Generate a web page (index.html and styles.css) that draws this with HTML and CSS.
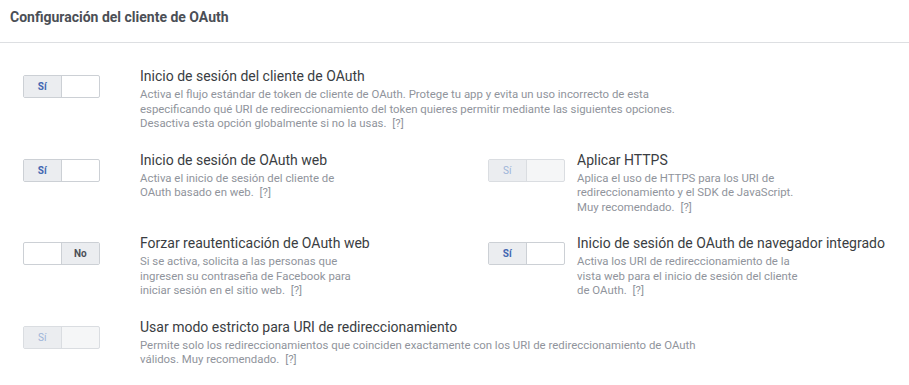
FILE: index.html
```html
<!DOCTYPE html>
<html lang="es">
<head>
    <meta charset="UTF-8">
    <title>Configuración del cliente de OAuth</title>
    <link rel="stylesheet" href="styles.css">
</head>
<body>
    <div class="panel-header">Configuración del cliente de OAuth</div>

    <div class="settings">
        <!-- fila completa -->
        <div class="setting wide">
            <div class="toggle-cell">
                <div class="toggle on"><span class="opt">Sí</span><span class="opt"></span></div>
            </div>
            <div class="info">
                <div class="title">Inicio de sesión del cliente de OAuth</div>
                <div class="desc">Activa el flujo estándar de token de cliente de OAuth. Protege tu app y evita un uso incorrecto de esta especificando qué URI de redireccionamiento del token quieres permitir mediante las siguientes opciones. Desactiva esta opción globalmente si no la usas. <span class="help">[?]</span></div>
            </div>
        </div>

        <div class="setting left">
            <div class="toggle-cell">
                <div class="toggle on"><span class="opt">Sí</span><span class="opt"></span></div>
            </div>
            <div class="info">
                <div class="title">Inicio de sesión de OAuth web</div>
                <div class="desc">Activa el inicio de sesión del cliente de OAuth basado en web. <span class="help">[?]</span></div>
            </div>
        </div>
        <div class="setting right">
            <div class="toggle-cell">
                <div class="toggle on disabled"><span class="opt">Sí</span><span class="opt"></span></div>
            </div>
            <div class="info">
                <div class="title">Aplicar HTTPS</div>
                <div class="desc">Aplica el uso de HTTPS para los URI de redireccionamiento y el SDK de JavaScript. Muy recomendado. <span class="help">[?]</span></div>
            </div>
        </div>

        <div class="setting left">
            <div class="toggle-cell">
                <div class="toggle off"><span class="opt"></span><span class="opt">No</span></div>
            </div>
            <div class="info">
                <div class="title">Forzar reautenticación de OAuth web</div>
                <div class="desc">Si se activa, solicita a las personas que ingresen su contraseña de Facebook para iniciar sesión en el sitio web. <span class="help">[?]</span></div>
            </div>
        </div>
        <div class="setting right">
            <div class="toggle-cell">
                <div class="toggle on"><span class="opt">Sí</span><span class="opt"></span></div>
            </div>
            <div class="info">
                <div class="title">Inicio de sesión de OAuth de navegador integrado</div>
                <div class="desc">Activa los URI de redireccionamiento de la vista web para el inicio de sesión del cliente de OAuth. <span class="help">[?]</span></div>
            </div>
        </div>

        <div class="setting wide">
            <div class="toggle-cell">
                <div class="toggle on disabled"><span class="opt">Sí</span><span class="opt"></span></div>
            </div>
            <div class="info">
                <div class="title">Usar modo estricto para URI de redireccionamiento</div>
                <div class="desc">Permite solo los redireccionamientos que coinciden exactamente con los URI de redireccionamiento de OAuth válidos. Muy recomendado. <span class="help">[?]</span></div>
            </div>
        </div>
    </div>
</body>
</html>
```

FILE: styles.css
```css
body {
    margin: 0;
    font-family: Roboto, "Liberation Sans", Arial, sans-serif;
    background: #fff;
    color: #1d2129;
}

.panel-header {
    height: 42px;
    line-height: 35px;
    padding-left: 10px;
    font-size: 14px;
    font-weight: bold;
    color: #4b4f56;
    border-bottom: 1px solid #dddfe2;
}

.settings {
    display: grid;
    grid-template-columns: 465px 1fr;
    row-gap: 20px;
    padding: 24px 0 0 23px;
}

.setting {
    display: flex;
    align-items: flex-start;
}
.setting.wide {
    grid-column: 1 / 3;
}

.toggle-cell {
    width: 117px;
    flex-shrink: 0;
    padding-top: 8px;
}
.setting.right .toggle-cell {
    width: 89px;
}

.toggle {
    display: flex;
    width: 75px;
    height: 21px;
    border: 1px solid #ccd0d5;
    border-radius: 2px;
    background: #fff;
    overflow: hidden;
}
.toggle .opt {
    width: 37px;
    display: flex;
    align-items: center;
    justify-content: center;
    font-size: 10px;
    font-weight: bold;
}
.toggle .opt + .opt {
    width: 38px;
    border-left: 1px solid #ccd0d5;
}
.toggle.on .opt:first-child {
    background: #ebedf0;
    color: #4267b2;
}
.toggle.off .opt:last-child {
    background: #ebedf0;
    color: #4b4f56;
}
.toggle.disabled {
    border-color: #dadde1;
    background: #f5f6f7;
}
.toggle.disabled .opt + .opt {
    border-left-color: #dadde1;
}
.toggle.disabled.on .opt:first-child {
    background: #ebedf0;
    color: #9cb4d8;
    font-weight: normal;
}

.title {
    font-size: 14px;
    line-height: 18px;
    color: #3a3d42;
}
.desc {
    margin-top: 2px;
    font-size: 11.4px;
    line-height: 14.5px;
    color: #90949c;
}
.setting.wide .desc {
    max-width: 570px;
}
.setting.left .desc {
    max-width: 215px;
}
.setting.right .desc {
    max-width: 225px;
}
.help {
    margin-left: 3px;
}
```
